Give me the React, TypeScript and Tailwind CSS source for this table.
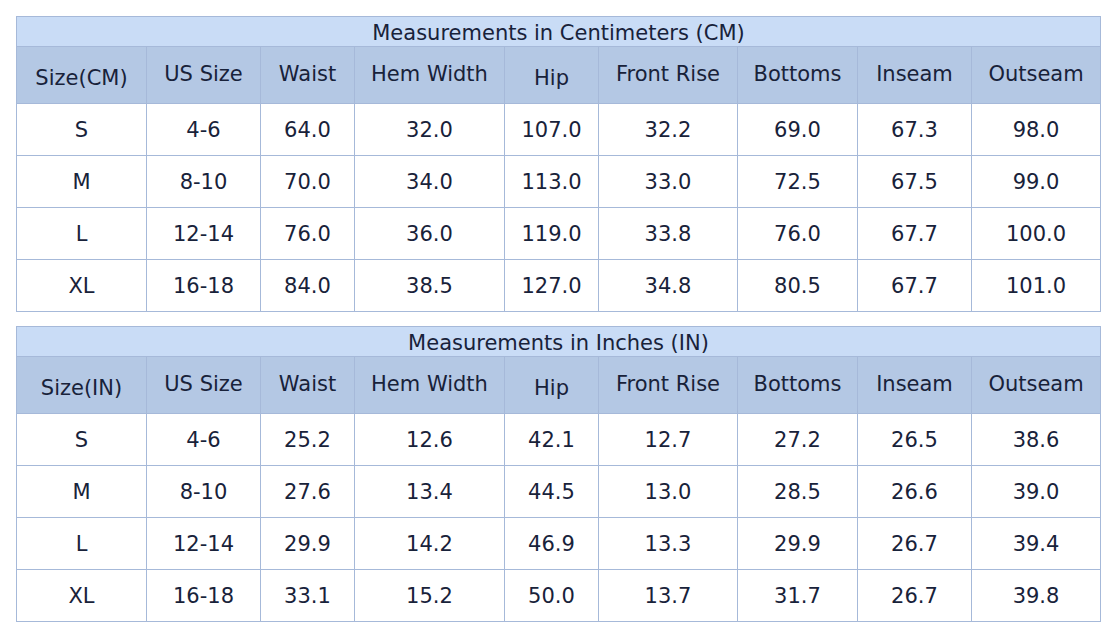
const headers = ["US Size", "Waist", "Hem Width", "Hip", "Front Rise", "Bottoms", "Inseam", "Outseam"];
const widths = [130, 114, 94, 150, 94, 139, 120, 114, 129];

const cmRows = [
  ["S", "4-6", "64.0", "32.0", "107.0", "32.2", "69.0", "67.3", "98.0"],
  ["M", "8-10", "70.0", "34.0", "113.0", "33.0", "72.5", "67.5", "99.0"],
  ["L", "12-14", "76.0", "36.0", "119.0", "33.8", "76.0", "67.7", "100.0"],
  ["XL", "16-18", "84.0", "38.5", "127.0", "34.8", "80.5", "67.7", "101.0"],
];

const inRows = [
  ["S", "4-6", "25.2", "12.6", "42.1", "12.7", "27.2", "26.5", "38.6"],
  ["M", "8-10", "27.6", "13.4", "44.5", "13.0", "28.5", "26.6", "39.0"],
  ["L", "12-14", "29.9", "14.2", "46.9", "13.3", "29.9", "26.7", "39.4"],
  ["XL", "16-18", "33.1", "15.2", "50.0", "13.7", "31.7", "26.7", "39.8"],
];

function SizeTable({ title, unit, rows }: { title: string; unit: string; rows: string[][] }) {
  const cols = [`Size(${unit})`, ...headers];
  return (
    <table className="table-fixed border-collapse w-[1085px] text-[#18223a] text-[21px]">
      <colgroup>
        {widths.map((w, i) => (
          <col key={i} style={{ width: w }} />
        ))}
      </colgroup>
      <thead>
        <tr className="h-[30px]">
          <th colSpan={9} className="bg-[#c9dcf6] border border-[#a6b9d9] font-normal p-0 pt-[4px] leading-none">
            {title}
          </th>
        </tr>
        <tr className="h-[57px] bg-[#b4c8e4]">
          {cols.map((c, i) => (
            <th
              key={c}
              className={`border border-[#a6b9d9] font-normal p-0 ${i === 0 || c === "Hip" ? "pt-[8px]" : ""}`}
            >
              {c}
            </th>
          ))}
        </tr>
      </thead>
      <tbody>
        {rows.map((r) => (
          <tr key={r[0]} className="h-[52px] bg-white">
            {r.map((v, i) => (
              <td key={i} className="border border-[#a6b9d9] text-center p-0 pt-[2px]">
                {v}
              </td>
            ))}
          </tr>
        ))}
      </tbody>
    </table>
  );
}

export default function App() {
  return (
    <div className="bg-white w-[1116px] h-[642px] pl-[16px] pt-[16px] flex flex-col gap-[14px] font-['DejaVu_Sans',Verdana,sans-serif]">
      <SizeTable title="Measurements in Centimeters (CM)" unit="CM" rows={cmRows} />
      <SizeTable title="Measurements in Inches (IN)" unit="IN" rows={inRows} />
    </div>
  );
}
